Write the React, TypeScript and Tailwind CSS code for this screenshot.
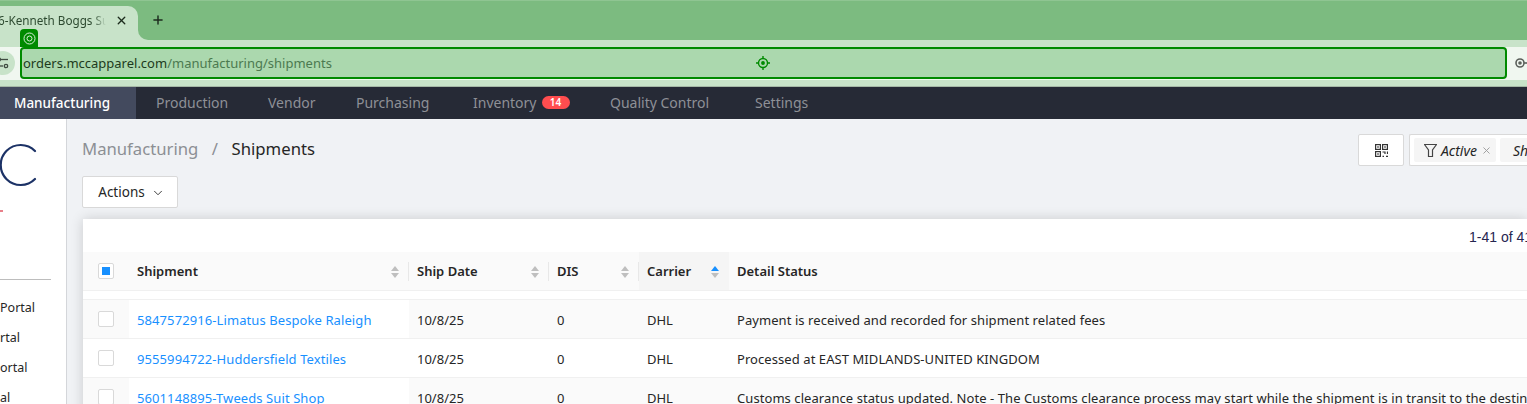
import { ChevronDown, Plus, X } from 'lucide-react';

const navItems = [
  { label: 'Production', width: 'w-[112px]' },
  { label: 'Vendor', width: 'w-[88px]' },
  { label: 'Purchasing', width: 'w-[117px]' },
  { label: 'Inventory', width: 'w-[137px]', badge: '14' },
  { label: 'Quality Control', width: 'w-[145px]' },
  { label: 'Settings', width: 'w-[90px]' },
];

const columns = [
  { label: 'Shipment' },
  { label: 'Ship Date' },
  { label: 'DIS' },
  { label: 'Carrier', sorted: true },
];

const rows = [
  { id: '5847572916-Limatus Bespoke Raleigh', date: '10/8/25', dis: '0', carrier: 'DHL', status: 'Payment is received and recorded for shipment related fees' },
  { id: '9555994722-Huddersfield Textiles', date: '10/8/25', dis: '0', carrier: 'DHL', status: 'Processed at EAST MIDLANDS-UNITED KINGDOM' },
  { id: '5601148895-Tweeds Suit Shop', date: '10/8/25', dis: '0', carrier: 'DHL', status: 'Customs clearance status updated. Note - The Customs clearance process may start while the shipment is in transit to the destination.' },
];

const gridCols = 'grid grid-cols-[46px_280px_140px_90px_90px_1fr]';

function SortIcon({ active }: { active?: boolean }) {
  return (
    <svg width="8" height="14" viewBox="0 0 8 14" className="shrink-0">
      <path d="M4 1 L8 6 H0 Z" fill={active ? '#1890ff' : '#bfbfbf'} />
      <path d="M0 8 H8 L4 13 Z" fill="#bfbfbf" />
    </svg>
  );
}

function Checkbox({ checked }: { checked?: boolean }) {
  return (
    <span className="flex h-4 w-4 items-center justify-center rounded-[2px] border border-[#d9d9d9] bg-white">
      {checked && <span className="h-2 w-2 bg-[#1890ff]" />}
    </span>
  );
}

export default function App() {
  return (
    <div className="flex h-[404px] w-[1527px] flex-col overflow-hidden bg-[#f0f2f5] font-['Noto_Sans',sans-serif] text-[13px] text-[#262626]">
      {/* Browser tabs */}
      <div className="flex h-10 shrink-0 items-end border-t border-[#8fc592] bg-[#7cbb80]">
        <div className="flex h-[34px] w-[138px] items-center justify-between rounded-tr-[10px] bg-[#c8e3c9] pb-[5px] pr-[10px]">
          <span className="ml-[-2px] w-[108px] overflow-hidden whitespace-nowrap text-[11.7px] text-[#2d4a30] [mask-image:linear-gradient(to_right,black_88%,transparent)]">6-Kenneth Boggs Suit</span>
          <X size={13} strokeWidth={2.5} className="text-[#1c2b1d]" />
        </div>
        <div className="h-[10px] w-[10px] bg-[#c8e3c9]">
          <div className="h-full w-full rounded-bl-[10px] bg-[#7cbb80]" />
        </div>
        <Plus size={14} strokeWidth={2.5} className="mb-[13px] ml-[3px] text-[#1c2b1d]" />
      </div>

      {/* Address bar */}
      <div className="relative flex h-[47px] shrink-0 items-center border-b border-[#a5b8a6] bg-[#c8e3c9]">
        <span className="absolute left-[20px] top-[-11px] z-10 flex h-[18px] w-[18px] items-center justify-center rounded-t-[4px] bg-[#008a00]">
          <svg width="13" height="13" viewBox="0 0 13 13" fill="none" stroke="#d7efd8" strokeWidth="1">
            <circle cx="6.5" cy="6.5" r="5.5" />
            <circle cx="6.5" cy="6.5" r="2.5" />
          </svg>
        </span>
        <div className="flex h-[33px] w-full items-center bg-[#f0f7f0]">
          <div className="ml-[-9px] mr-[5px] flex h-6 w-6 shrink-0 items-center justify-center rounded-full bg-[#c8e3c9]">
            <svg width="14" height="12" viewBox="0 0 14 12" fill="none" stroke="#3f4a40" strokeWidth="1.3">
              <circle cx="3" cy="2.5" r="1.5" />
              <path d="M5 2.5 H12" />
              <path d="M1 9 H7" />
              <circle cx="10" cy="9" r="1.7" />
            </svg>
          </div>
          <div className="flex h-[32px] w-[1487px] shrink-0 items-center justify-between rounded-[4px] border-[2px] border-[#008a00] bg-[#abd8ae] pl-px">
            <span className="pt-px text-[13px]">
              <span className="text-[#1d3b20]">orders.mccapparel.com</span>
              <span className="text-[#4b7a50]">/manufacturing/shipments</span>
            </span>
            <svg width="14" height="14" viewBox="0 0 14 14" fill="none" stroke="#008a00" strokeWidth="1.4" className="mr-[735px]">
              <circle cx="7" cy="7" r="4.5" />
              <circle cx="7" cy="7" r="1.2" fill="#008a00" />
              <path d="M7 0 V3 M7 11 V14 M0 7 H3 M11 7 H14" />
            </svg>
          </div>
          <svg width="18" height="12" viewBox="0 0 18 12" fill="none" stroke="#5a5f5a" strokeWidth="1.6" className="ml-[8px] shrink-0">
            <circle cx="5" cy="6" r="4" />
            <circle cx="5" cy="6" r="1" fill="#5a5f5a" />
            <path d="M9 6 H18" />
          </svg>
        </div>
      </div>

      {/* App nav */}
      <nav className="flex h-8 shrink-0 items-stretch bg-[#262a36] text-[14px] text-[#8e9096]">
        <div className="flex w-[136px] items-center bg-[#434a5e] pl-[14px] text-[13.5px] font-medium text-white">Manufacturing</div>
        {navItems.map((item) => (
          <div key={item.label} className={`flex items-center pb-px pl-5 ${item.width}`}>
            {item.label}
            {item.badge && (
              <span className="ml-[5px] flex h-[13px] w-7 items-center justify-center rounded-full bg-[#ff4d4f] text-[10px] font-semibold text-white">{item.badge}</span>
            )}
          </div>
        ))}
      </nav>

      <div className="flex min-h-0 flex-1">
        {/* Sidebar */}
        <aside className="w-[67px] shrink-0 border-r border-[#d4d6da] bg-white text-[#262626]">
          <svg width="40" height="46" viewBox="0 0 40 46" fill="none" stroke="#1c3266" strokeWidth="2.2" className="mt-[24px]">
            <path d="M35 8 A20 20 0 1 0 35 36" strokeLinecap="round" />
          </svg>
          <div className="mt-[21px] h-[2px] w-[3px] bg-[#e8808a]" />
          <div className="mt-[67px] h-px w-[51px] bg-[#bdbdbd]" />
          <div className="mt-[19px] flex flex-col items-start gap-[12px] text-[12.5px] leading-[18px]">
            <span>Portal</span>
            <span>rtal</span>
            <span>ortal</span>
            <span>al</span>
          </div>
        </aside>

        {/* Main */}
        <main className="min-w-0 flex-1 pl-[15px] pt-[18px]">
          <div className="flex items-start justify-between">
            <div className="flex h-6 items-center text-[16.7px]">
              <span className="text-[#8c8f94]">Manufacturing</span>
              <span className="mx-[13.5px] text-[#8c8f94]">/</span>
              <span>Shipments</span>
            </div>
            <div className="mt-[-3px] flex gap-[5px]">
              <div className="flex h-8 w-[46px] items-center justify-center rounded-[2px] border border-[#d9d9d9] bg-white">
                <svg width="13" height="13" viewBox="0 0 13 13" fill="none" stroke="#333" strokeWidth="1.2">
                  <rect x="0.6" y="0.6" width="4.8" height="4.8" />
                  <rect x="7.6" y="0.6" width="4.8" height="4.8" />
                  <rect x="0.6" y="7.6" width="4.8" height="4.8" />
                  <path d="M2 3 H4 M9 3 H11 M2 10 H4 M7.5 8 H10 V10 M12.5 7.5 V10 M7.5 12.4 H9 M11 12.4 H13" />
                </svg>
              </div>
              <div className="flex h-8 w-[118px] items-center gap-[4px] rounded-l-[2px] border border-r-0 border-[#d9d9d9] bg-white pl-1 italic">
                <span className="flex h-6 w-[82px] shrink-0 items-center gap-1 rounded-[2px] bg-[#f5f5f5] pl-[10px] text-[14px]">
                  <svg width="13" height="13" viewBox="0 0 13 13" fill="none" stroke="#444" strokeWidth="1.2" className="shrink-0">
                    <path d="M0.5 0.5 H12.5 L8.5 6 V12.5 H4.5 V6 Z" />
                  </svg>
                  <span>Active</span>
                  <X size={11} className="shrink-0 text-[#999]" />
                </span>
                <span className="flex h-6 flex-1 items-center overflow-hidden rounded-l-[2px] bg-[#f5f5f5] pl-[13px] text-[14px]">Sh</span>
              </div>
            </div>
          </div>

          <button className="mt-[10px] flex h-8 w-[96px] items-center justify-center gap-[6px] rounded-[2px] border border-[#d9d9d9] bg-white pl-[3px] pt-px text-[13.5px]">
            Actions <ChevronDown size={14} strokeWidth={1.5} />
          </button>

          <section className="ml-px mt-[11px] bg-white shadow-[0_0_12px_rgba(0,0,0,0.16)]">
            <div className="flex h-[33px] items-center justify-end pt-[3px] font-['Liberation_Sans',sans-serif] text-[14px] text-[#262650]">
              <span className="w-[58px] overflow-hidden whitespace-nowrap">1-41 of 41</span>
            </div>

            {/* Header */}
            <div className={`${gridCols} h-[39px] border-b border-[#f0f0f0] bg-[#fafafa] font-semibold`}>
              <div className="flex items-center pl-[15px]">
                <Checkbox checked />
              </div>
              {columns.map((col) => (
                <div key={col.label} className={`relative flex items-center justify-between pl-2 pr-[10px] pt-px ${col.sorted ? 'bg-[#f5f5f5]' : ''}`}>
                  {col.label}
                  <SortIcon active={col.sorted} />
                  {!col.sorted && <span className="absolute right-0 top-[10px] h-[19px] w-px bg-[#e8e8e8]" />}
                </div>
              ))}
              <div className="flex items-center pl-2 pt-px">Detail Status</div>
            </div>
            <div className="h-[9px] border-b border-[#f0f0f0]" />

            {/* Rows */}
            {rows.map((row, i) => (
              <div key={row.id} className={`${gridCols} h-[39px] border-b border-[#f0f0f0] ${i % 2 === 0 ? 'bg-[#fafafa]' : 'bg-white'}`}>
                <div className="flex items-center pl-[15px]">
                  <Checkbox />
                </div>
                <div className="flex items-center bg-white pl-2 pt-1 tracking-[0.09px] text-[#1890ff]">{row.id}</div>
                <div className="flex items-center pl-2 pt-1">{row.date}</div>
                <div className="flex items-center pl-2 pt-1">{row.dis}</div>
                <div className="flex items-center pl-2 pt-1">{row.carrier}</div>
                <div className="flex items-center overflow-hidden whitespace-nowrap pl-2 pt-1 tracking-[0.07px]">{row.status}</div>
              </div>
            ))}
          </section>
        </main>
      </div>
    </div>
  );
}
